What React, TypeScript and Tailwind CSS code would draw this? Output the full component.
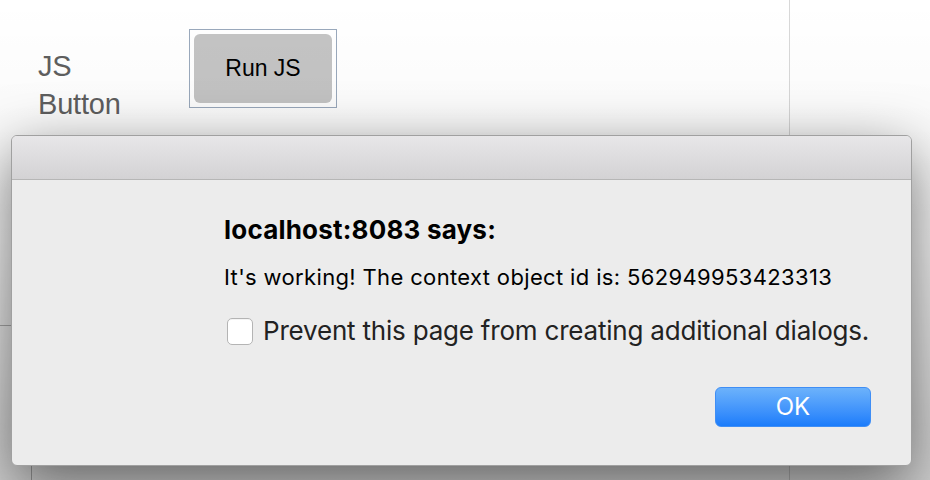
import React from "react";

export default function App() {
  return (
    <div className="relative w-[930px] h-[480px] overflow-hidden bg-white font-['Liberation_Sans',sans-serif]">
      {/* page underneath */}
      <div className="flex h-full">
        <div className="w-[790px] h-full border-r border-[#d8d8d8] flex flex-col">
          <div className="flex pt-[29px] pl-[38px] h-[325px]">
            <div className="w-[151px] pt-[18px] text-[29px] leading-[38px] text-[#5f5f5f] tracking-[-0.2px]">
              JS
              <br />
              Button
            </div>
            <div className="h-fit border border-[#9aa9bc] p-[4px]">
              <button className="w-[138px] h-[69px] rounded-[6px] bg-[#c4c4c4] text-[23px] text-black">
                Run JS
              </button>
            </div>
          </div>
          <div className="flex-1 border-t border-[#b8b8b8] pl-[31px]">
            <div className="h-full border-l border-[#b8b8b8]" />
          </div>
        </div>
      </div>

      {/* dimming */}
      <div className="absolute inset-0 bg-gradient-to-b from-transparent via-[rgba(0,0,0,0.04)] to-[rgba(0,0,0,0.18)]" />

      {/* dialog */}
      <div className="absolute left-[11px] top-[135px] w-[901px] h-[331px] rounded-[6px] border border-[#a0a0a0] bg-[#ececec] overflow-hidden shadow-[0_18px_60px_rgba(0,0,0,0.55)] font-['Inter',sans-serif]">
        <div className="h-[44px] border-b border-[#b6b6b6] bg-gradient-to-b from-[#e8e7e9] to-[#d3d2d4]" />
        <div className="pl-[212px] pr-[40px] pt-[35px] flex flex-col">
          <div className="text-[26px] leading-[30px] font-bold text-black tracking-[0.2px]">localhost:8083 says:</div>
          <div className="mt-[19px] text-[22px] leading-[26px] text-black tracking-[0.35px]">
            It's working! The context object id is: 562949953423313
          </div>
          <label className="mt-[27px] flex items-center gap-[10px] pl-[3px]">
            <span className="w-[26px] h-[27px] rounded-[5px] border border-[#b4b4b4] bg-white shadow-[inset_0_1px_0_rgba(0,0,0,0.04)]" />
            <span className="text-[26px] leading-[28px] text-[#222] tracking-[-0.2px]">
              Prevent this page from creating additional dialogs.
            </span>
          </label>
          <div className="mt-[42px] flex justify-end">
            <button className="w-[156px] h-[40px] rounded-[6px] border border-[#3f8ef5] bg-gradient-to-b from-[#6cb2fb] to-[#1a7cfb] text-white text-[24px] leading-none">
              OK
            </button>
          </div>
        </div>
      </div>
    </div>
  );
}
